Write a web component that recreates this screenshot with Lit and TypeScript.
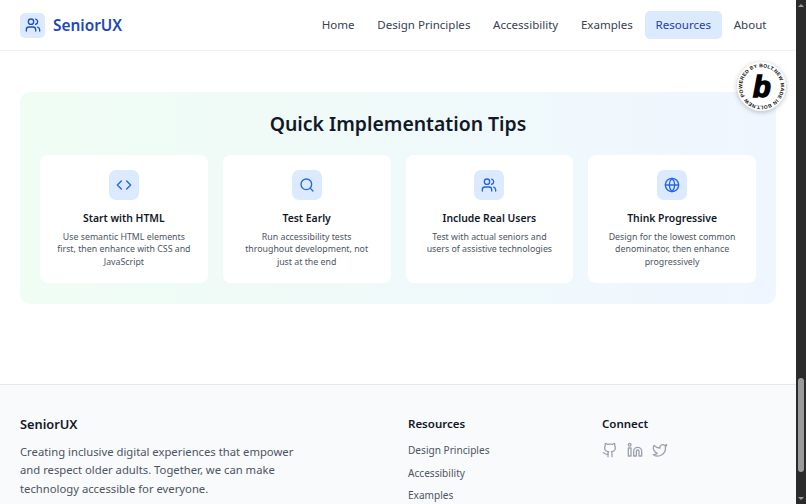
import { LitElement, html, css, svg } from "lit";
import { customElement } from "lit/decorators.js";

const users = svg`<path d="M16 21v-2a4 4 0 0 0-4-4H6a4 4 0 0 0-4 4v2"/><circle cx="9" cy="7" r="4"/><path d="M22 21v-2a4 4 0 0 0-3-3.87"/><path d="M16 3.13a4 4 0 0 1 0 7.75"/>`;
const code = svg`<polyline points="16 18 22 12 16 6"/><polyline points="8 6 2 12 8 18"/>`;
const search = svg`<circle cx="11" cy="11" r="8"/><path d="m21 21-4.3-4.3"/>`;
const globe = svg`<circle cx="12" cy="12" r="10"/><path d="M12 2a14.5 14.5 0 0 0 0 20 14.5 14.5 0 0 0 0-20"/><path d="M2 12h20"/>`;
const github = svg`<path d="M15 22v-4a4.8 4.8 0 0 0-1-3.5c3 0 6-2 6-5.5.08-1.25-.27-2.48-1-3.5.28-1.15.28-2.35 0-3.5 0 0-1 0-3 1.5-2.64-.5-5.36-.5-8 0C6 2 5 2 5 2c-.3 1.15-.3 2.35 0 3.5A5.403 5.403 0 0 0 4 9c0 3.5 3 5.5 6 5.5-.39.49-.68 1.05-.85 1.65-.17.6-.22 1.23-.15 1.85v4"/><path d="M9 18c-4.51 2-5-2-7-2"/>`;
const linkedin = svg`<path d="M16 8a6 6 0 0 1 6 6v7h-4v-7a2 2 0 0 0-2-2 2 2 0 0 0-2 2v7h-4v-7a6 6 0 0 1 6-6z"/><rect width="4" height="12" x="2" y="9"/><circle cx="4" cy="4" r="2"/>`;
const twitter = svg`<path d="M22 4s-.7 2.1-2 3.4c1.6 10-9.4 17.3-18 11.6 2.2.1 4.4-.6 6-2C3 15.5.5 9.6 3 5c2.2 2.6 5.6 4.1 9 4-.9-4.2 4-6.6 7-3.8 1.1 0 3-1.2 3-1.2z"/>`;

const tips = [
  { icon: code, title: "Start with HTML", text: "Use semantic HTML elements first, then enhance with CSS and JavaScript" },
  { icon: search, title: "Test Early", text: "Run accessibility tests throughout development, not just at the end" },
  { icon: users, title: "Include Real Users", text: "Test with actual seniors and users of assistive technologies" },
  { icon: globe, title: "Think Progressive", text: "Design for the lowest common denominator, then enhance progressively" },
];
const nav = ["Home", "Design Principles", "Accessibility", "Examples", "Resources", "About"];
const icon = (c: unknown, size = 16) =>
  html`<svg class="ic" width=${size} height=${size} viewBox="0 0 24 24">${c}</svg>`;

@customElement("app-root")
export class AppRoot extends LitElement {
  static styles = css`
    :host {
      display: flex;
      height: 504px;
      overflow: hidden;
      position: relative;
      background: #fff;
      font-family: "Noto Sans", sans-serif;
      color: #111827;
    }
    .ic { fill: none; stroke: currentColor; stroke-width: 2; stroke-linecap: round; stroke-linejoin: round; display: block; }
    .page { flex: 1; min-width: 0; display: flex; flex-direction: column; }
    header {
      flex: none; box-sizing: border-box; padding: 0 20px; height: 51px;
      display: flex; align-items: center; justify-content: space-between;
      border-bottom: 1px solid #f0f1f3;
    }
    .brand { display: flex; align-items: center; gap: 8px; color: #1d48b8; font-size: 15.4px; font-weight: 600; }
    .logo { width: 25px; height: 25px; border-radius: 5px; background: #dbeafe; color: #1e4fc0; display: grid; place-items: center; }
    nav { display: flex; gap: 1.7px; margin-right: -1px; }
    nav a { padding: 0 10.5px; height: 28px; box-sizing: border-box; line-height: 28px; border-radius: 5px; font-size: 11.55px; color: #374151; }
    nav a.on { background: #dbeafe; color: #1e40af; }
    main { padding: 41px 20px 0; height: 333px; box-sizing: border-box; flex: none; }
    .tips { background: linear-gradient(90deg, #f0fdf4, #eff6ff); border-radius: 10px; padding: 20px; height: 212px; box-sizing: border-box; }
    h2 { margin: 0 0 19px; font-size: 19.4px; line-height: 24px; font-weight: 600; text-align: center; color: #111827; }
    .grid { display: grid; grid-template-columns: repeat(4, 1fr); gap: 15px; }
    .card { background: #fff; border-radius: 8px; height: 128px; box-sizing: border-box; padding: 15px; display: flex; flex-direction: column; align-items: center; text-align: center; }
    .tile { flex: none; width: 30px; height: 30px; border-radius: 7px; background: #dbeafe; color: #2563eb; display: grid; place-items: center; margin-bottom: 9.5px; }
    h3 { flex: none; margin: 0 0 5px; font-size: 10.4px; line-height: 16px; font-weight: 600; color: #111827; }
    .card p { flex: none; margin: 0; font-size: 8.8px; line-height: 12.6px; color: #4b5563; }
    footer { flex: 1; background: #f9fafb; border-top: 1px solid #e5e7eb; padding: 30px 20px 0; }
    .cols { display: grid; grid-template-columns: repeat(4, 1fr); gap: 20px; }
    .about { grid-column: span 2; }
    h4 { margin: 0 0 9px; font-size: 11.5px; line-height: 18px; font-weight: 600; color: #111827; }
    .about h4 { font-size: 12.8px; margin-bottom: 9.5px; }
    .about p { margin: 0; max-width: 290px; font-size: 11.27px; line-height: 18.7px; color: #4b5563; }
    .links { display: flex; flex-direction: column; gap: 5px; font-size: 10.1px; line-height: 17.5px; color: #4b5563; }
    .social { display: flex; gap: 9px; margin: 1px 0 0 0; color: #9ca3af; }
    .badge { position: absolute; left: 736.5px; top: 62px; width: 49px; height: 49px; border-radius: 50%; background: #fff; box-shadow: 0 1px 5px rgba(0,0,0,.25); }
    .badge text.ring { font: 700 5px "Liberation Sans", sans-serif; fill: #111; }
    .badge text.b { font: italic 900 29px "Liberation Sans", sans-serif; fill: #000; stroke: #000; stroke-width: 1.5px; }
    .bar { width: 10px; flex: none; background: #2b2b2b; position: relative; }
    .thumb { position: absolute; left: 2px; right: 2px; top: 378px; height: 94px; border-radius: 3px; background: #9b9b9b; }
    .arrow { position: absolute; left: 2px; width: 0; height: 0; border-left: 3px solid transparent; border-right: 3px solid transparent; }
    .up { top: 4px; border-bottom: 3px solid #9b9b9b; }
    .down { bottom: 4px; border-top: 3px solid #9b9b9b; }
  `;

  render() {
    return html`
      <div class="page">
        <header>
          <div class="brand"><span class="logo">${icon(users)}</span>SeniorUX</div>
          <nav>${nav.map((n) => html`<a class=${n === "Resources" ? "on" : ""}>${n}</a>`)}</nav>
        </header>
        <main>
          <section class="tips">
            <h2>Quick Implementation Tips</h2>
            <div class="grid">
              ${tips.map((t) => html`<article class="card">
                <span class="tile">${icon(t.icon)}</span>
                <h3>${t.title}</h3>
                <p>${t.text}</p>
              </article>`)}
            </div>
          </section>
        </main>
        <footer>
          <div class="cols">
            <div class="about"><h4>SeniorUX</h4><p>Creating inclusive digital experiences that empower and respect older adults. Together, we can make technology accessible for everyone.</p></div>
            <div><h4>Resources</h4><div class="links"><span>Design Principles</span><span>Accessibility</span><span>Examples</span></div></div>
            <div><h4>Connect</h4><div class="social">${icon(github)}${icon(linkedin)}${icon(twitter)}</div></div>
          </div>
        </footer>
      </div>
      <div class="bar"><i class="arrow up"></i><div class="thumb"></div><i class="arrow down"></i></div>
      <div class="badge">
        <svg width="49" height="49" viewBox="0 0 49 49">
          <defs><path id="ring" d="M7.7 34a19.3 19.3 0 1 1 33.6 0a19.3 19.3 0 0 1 -33.6 0"/></defs>
          <text class="ring"><textPath href="#ring" textLength="118" lengthAdjust="spacing">POWERED BY BOLT.NEW MADE IN BOLT.NEW</textPath></text>
          <text class="b" x="16" y="35">b</text>
        </svg>
      </div>
    `;
  }
}
